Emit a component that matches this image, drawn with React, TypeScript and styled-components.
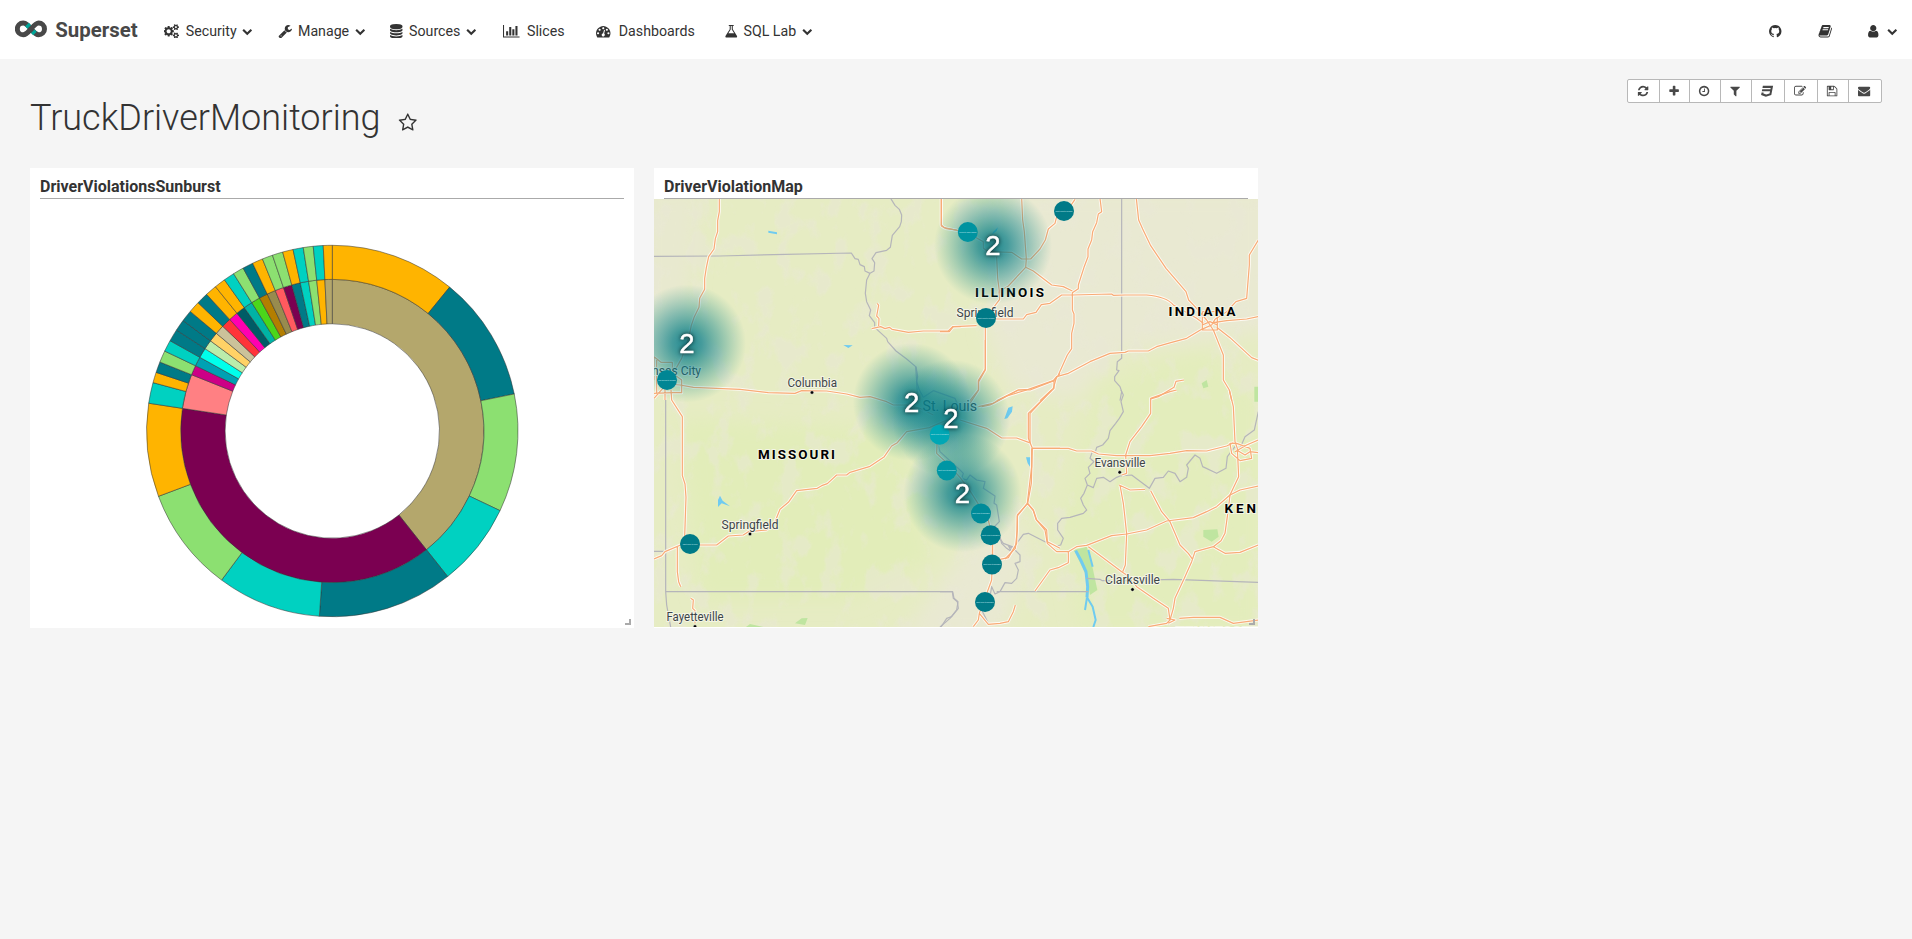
import React from "react";
import styled, { createGlobalStyle } from "styled-components";

const GlobalStyle = createGlobalStyle`
  * { box-sizing: border-box; }
  html, body { margin: 0; padding: 0; background: #f5f5f5; }
  body {
    font-family: Roboto, "Liberation Sans", sans-serif;
    font-size: 14.2px;
    color: #333;
    overflow: hidden;
  }
`;

/* ---------- icons ---------- */

const ICONS = {
  cogs: "M832 896q0-106-75-181t-181-75-181 75-75 181 75 181 181 75 181-75 75-181zm768 512q0-52-38-90t-90-38-90 38-38 90q0 53 37.5 90.5t90.5 37.5 90.5-37.5 37.5-90.5zm0-1024q0-52-38-90t-90-38-90 38-38 90q0 53 37.5 90.5t90.5 37.5 90.5-37.5 37.5-90.5zm-384 421v185q0 10-7 19.5t-16 10.5l-155 24q-11 35-32 76 34 48 90 115 7 11 7 20 0 12-7 19-23 30-82.5 89.5t-78.5 59.5q-11 0-21-7l-115-90q-37 19-77 31-11 108-23 155-7 24-30 24h-186q-11 0-20-7.5t-10-17.5l-23-153q-34-10-75-31l-118 89q-7 7-20 7-11 0-21-8-144-133-144-160 0-9 7-19 10-14 41-53t47-61q-23-44-35-82l-152-24q-10-1-17-9.5t-7-19.5v-185q0-10 7-19.5t16-10.5l155-24q11-35 32-76-34-48-90-115-7-11-7-20 0-12 7-20 22-30 82-89t79-59q11 0 21 7l115 90q34-18 77-32 11-108 23-154 7-24 30-24h186q11 0 20 7.5t10 17.5l23 153q34 10 75 31l118-89q8-7 20-7 11 0 21 8 144 133 144 160 0 8-7 19-12 16-42 54t-45 60q23 48 34 82l152 23q10 2 17 10.5t7 19.5zm640 533v140q0 16-149 31-12 27-30 52 51 113 51 138 0 4-4 7-122 71-124 71-8 0-46-47t-52-68q-20 2-30 2t-30-2q-14 21-52 68t-46 47q-2 0-124-71-4-3-4-7 0-25 51-138-18-25-30-52-149-15-149-31v-140q0-16 149-31 13-29 30-52-51-113-51-138 0-4 4-7 4-2 35-20t59-34 30-16q8 0 46 46.5t52 67.5q20-2 30-2t30 2q51-71 92-112l6-2q4 0 124 70 4 3 4 7 0 25-51 138 17 23 30 52 149 15 149 31zm0-1024v140q0 16-149 31-12 27-30 52 51 113 51 138 0 4-4 7-122 71-124 71-8 0-46-47t-52-68q-20 2-30 2t-30-2q-14 21-52 68t-46 47q-2 0-124-71-4-3-4-7 0-25 51-138-18-25-30-52-149-15-149-31v-140q0-16 149-31 13-29 30-52-51-113-51-138 0-4 4-7 4-2 35-20t59-34 30-16q8 0 46 46.5t52 67.5q20-2 30-2t30 2q51-71 92-112l6-2q4 0 124 70 4 3 4 7 0 25-51 138 17 23 30 52 149 15 149 31z",
  wrench: "M448 1472q0-26-19-45t-45-19-45 19-19 45 19 45 45 19 45-19 19-45zm644-420l-682 682q-37 37-90 37-52 0-91-37l-106-108q-38-36-38-90 0-53 38-91l681-681q39 98 114.5 173.5t173.5 114.5zm634-435q0 39-23 106-47 134-164.5 217.5t-258.5 83.5q-185 0-316.5-131.5t-131.5-316.5 131.5-316.5 316.5-131.5q58 0 121.5 16.5t107.5 46.5q16 11 16 28t-16 28l-293 169v224l193 107q5-3 79-48.5t135.5-81 70.5-35.5q15 0 23.5 10t8.5 25z",
  database: "M896 768q237 0 443-43t325-127v170q0 69-103 128t-280 93.5-385 34.5-385-34.5-280-93.5-103-128v-170q119 84 325 127t443 43zm0 768q237 0 443-43t325-127v170q0 69-103 128t-280 93.5-385 34.5-385-34.5-280-93.5-103-128v-170q119 84 325 127t443 43zm0-384q237 0 443-43t325-127v170q0 69-103 128t-280 93.5-385 34.5-385-34.5-280-93.5-103-128v-170q119 84 325 127t443 43zm0-1152q208 0 385 34.5t280 93.5 103 128v128q0 69-103 128t-280 93.5-385 34.5-385-34.5-280-93.5-103-128v-128q0-69 103-128t280-93.5 385-34.5z",
  chart: "M640 896v512h-256v-512h256zm384-512v1024h-256v-1024h256zm1024 1152v128h-2048v-1536h128v1408h1920zm-640-896v768h-256v-768h256zm384-384v1152h-256v-1152h256z",
  gauge: "M384 1152q0-53-37.5-90.5t-90.5-37.5-90.5 37.5-37.5 90.5 37.5 90.5 90.5 37.5 90.5-37.5 37.5-90.5zm192-448q0-53-37.5-90.5t-90.5-37.5-90.5 37.5-37.5 90.5 37.5 90.5 90.5 37.5 90.5-37.5 37.5-90.5zm428 481l101-382q6-26-7.5-48.5t-38.5-29.5-48 6.5-30 39.5l-101 382q-60 5-107 43.5t-63 98.5q-20 77 20 146t117 89 146-20 89-117q16-60-6-117t-72-91zm660-33q0-53-37.5-90.5t-90.5-37.5-90.5 37.5-37.5 90.5 37.5 90.5 90.5 37.5 90.5-37.5 37.5-90.5zm-640-640q0-53-37.5-90.5t-90.5-37.5-90.5 37.5-37.5 90.5 37.5 90.5 90.5 37.5 90.5-37.5 37.5-90.5zm448 192q0-53-37.5-90.5t-90.5-37.5-90.5 37.5-37.5 90.5 37.5 90.5 90.5 37.5 90.5-37.5 37.5-90.5zm320 448q0 261-141 483-19 29-54 29h-1402q-35 0-54-29-141-221-141-483 0-182 71-348t191-286 286-191 348-71 348 71 286 191 191 286 71 348z",
  flask: "M1591 1448q56 89 21.5 152.5t-140.5 63.5h-1152q-106 0-140.5-63.5t21.5-152.5l503-793v-399h-64q-26 0-45-19t-19-45 19-45 45-19h512q26 0 45 19t19 45-19 45-45 19h-64v399zm-779-725l-272 429h712l-272-429-20-31v-436h-128v436z",
  chevron: "M1683 808l-742 741q-19 19-45 19t-45-19l-742-741q-19-19-19-45.5t19-45.5l166-165q19-19 45-19t45 19l531 531 531-531q19-19 45-19t45 19l166 165q19 19 19 45.5t-19 45.5z",
  github: "M896 128q209 0 385.5 103t279.5 279.5 103 385.5q0 251-146.5 451.5t-378.5 277.5q-27 5-40-7t-13-30q0-3 .5-76.5t.5-134.5q0-97-52-142 57-6 102.5-18t94-39 81-66.5 53-105 20.5-150.5q0-119-79-206 37-91-8-204-28-9-81 11t-92 44l-38 24q-93-26-192-26t-192 26q-16-11-42.5-27t-83.5-38.5-85-13.5q-45 113-8 204-79 87-79 206 0 85 20.5 150t52.5 105 80.5 67 94 39 102.5 18q-39 36-49 103-21 10-45 15t-57 5-65.5-21.5-55.5-62.5q-19-32-48.5-52t-49.5-24l-20-3q-21 0-29 4.5t-5 11.5 9 14 13 12l7 5q22 10 43.5 38t31.5 51l10 23q13 38 44 61.5t67 30 69.5 7 55.5-3.5l23-4q0 38 .5 88.5t.5 54.5q0 18-13 30t-40 7q-232-77-378.5-277.5t-146.5-451.5q0-209 103-385.5t279.5-279.5 385.5-103z",
  book: "M1703 478q40 57 18 129l-275 906q-19 64-76.5 107.5t-122.5 43.5h-923q-77 0-148.5-53.5t-99.5-131.5q-24-67-2-127 0-4 3-27t4-37q1-8-3-21.5t-3-19.5q2-11 8-21t16.5-23.5 16.5-23.5q23-38 45-91.5t30-91.5q3-10 .5-30t-.5-28q3-11 17-28t17-23q21-36 42-92t25-90q1-9-2.5-32t.5-28q4-13 22-30.5t22-22.5q19-26 42.5-84.5t27.5-96.5q1-8-3-25.5t-2-26.5q2-8 9-18t18-23 17-21q8-12 16.5-30.5t15-35 16-36 19.5-32 26.5-23.5 36-11.5 47.5 5.5l-1 3q38-9 51-9h761q74 0 114 56t18 130l-274 906q-36 119-71.5 153.5t-128.5 34.5h-869q-27 0-38 15-11 16-1 43 24 70 144 70h923q29 0 56-15.5t35-41.5l300-987q7-22 5-57 38 15 59 43zm-1064 2q-4 13 2 22.5t20 9.5h608q13 0 25.5-9.5t16.5-22.5l21-64q4-13-2-22.5t-20-9.5h-608q-13 0-25.5 9.5t-16.5 22.5zm-83 256q-4 13 2 22.5t20 9.5h608q13 0 25.5-9.5t16.5-22.5l21-64q4-13-2-22.5t-20-9.5h-608q-13 0-25.5 9.5t-16.5 22.5z",
  user: "M1536 1399q0 109-62.5 187t-150.5 78h-854q-88 0-150.5-78t-62.5-187q0-85 8.5-160.5t31.5-152 58.5-131 94-89 134.5-34.5q131 128 313 128t313-128q76 0 134.5 34.5t94 89 58.5 131 31.5 152 8.5 160.5zm-256-887q0 159-112.5 271.5t-271.5 112.5-271.5-112.5-112.5-271.5 112.5-271.5 271.5-112.5 271.5 112.5 112.5 271.5z",
  star: "M1201 1004l306-297-422-62-189-382-189 382-422 62 306 297-73 421 378-199 377 199zm527-357q0 22-26 48l-363 354 86 500q1 7 1 20 0 50-41 50-19 0-40-12l-449-236-449 236q-22 12-40 12-21 0-31.5-14.5t-10.5-35.5q0-6 2-20l86-500-364-354q-25-27-25-48 0-37 56-46l502-73 225-455q19-41 49-41t49 41l225 455 502 73q56 9 56 46z",
  refresh: "M1639 1056q0 5-1 7-64 268-268 434.5t-478 166.5q-146 0-282.5-55t-243.5-157l-129 129q-19 19-45 19t-45-19-19-45v-448q0-26 19-45t45-19h448q26 0 45 19t19 45-19 45l-137 137q71 66 161 102t187 36q134 0 250-65t186-179q11-17 53-117 8-23 30-23h192q13 0 22.5 9.5t9.5 22.5zm25-800v448q0 26-19 45t-45 19h-448q-26 0-45-19t-19-45 19-45l138-138q-148-137-349-137-134 0-250 65t-186 179q-11 17-53 117-8 23-30 23h-199q-13 0-22.5-9.5t-9.5-22.5v-7q65-268 270-434.5t480-166.5q146 0 284 55.5t245 156.5l130-129q19-19 45-19t45 19 19 45z",
  plus: "M1600 736v192q0 40-28 68t-68 28h-416v416q0 40-28 68t-68 28h-192q-40 0-68-28t-28-68v-416h-416q-40 0-68-28t-28-68v-192q0-40 28-68t68-28h416v-416q0-40 28-68t68-28h192q40 0 68 28t28 68v416h416q40 0 68 28t28 68z",
  clock: "M1024 544v448q0 14-9 23t-23 9h-320q-14 0-23-9t-9-23v-64q0-14 9-23t23-9h224v-352q0-14 9-23t23-9h64q14 0 23 9t9 23zm416 352q0-148-73-273t-198-198-273-73-273 73-198 198-73 273 73 273 198 198 273 73 273-73 198-198 73-273zm224 0q0 209-103 385.5t-279.5 279.5-385.5 103-385.5-103-279.5-279.5-103-385.5 103-385.5 279.5-279.5 385.5-103 385.5 103 279.5 279.5 103 385.5z",
  filter: "M1595 295q17 41-14 70l-493 493v742q0 42-39 59-13 5-25 5-27 0-45-19l-256-256q-19-19-19-45v-486l-493-493q-31-29-14-70 17-39 59-39h1280q42 0 59 39z",
  css: "M275 128h1505l-266 1333-804 267-698-267 71-356h297l-29 147 422 161 486-161 68-339h-1208l58-297h1209l38-191h-1208z",
  edit: "M888 1184l116-116-152-152-116 116v56h96v96h56zm440-720q-16-16-33 1l-350 350q-17 17-1 33t33-1l350-350q17-17 1-33zm80 594v190q0 119-84.5 203.5t-203.5 84.5h-832q-119 0-203.5-84.5t-84.5-203.5v-832q0-119 84.5-203.5t203.5-84.5h832q63 0 117 25 15 7 18 23 3 17-9 29l-49 49q-14 14-32 8-23-6-45-6h-832q-66 0-113 47t-47 113v832q0 66 47 113t113 47h832q66 0 113-47t47-113v-126q0-13 9-22l64-64q15-15 35-7t20 29zm-96-738l288 288-672 672h-288v-288zm444 132l-92 92-288-288 92-92q28-28 68-28t68 28l152 152q28 28 28 68t-28 68z",
  save: "M512 1536h768v-384h-768v384zm896 0h128v-896q0-14-10-38.5t-20-34.5l-281-281q-10-10-34-20t-39-10v416q0 40-28 68t-68 28h-576q-40 0-68-28t-28-68v-416h-128v1280h128v-416q0-40 28-68t68-28h832q40 0 68 28t28 68v416zm-384-928v-320q0-13-9.5-22.5t-22.5-9.5h-192q-13 0-22.5 9.5t-9.5 22.5v320q0 13 9.5 22.5t22.5 9.5h192q13 0 22.5-9.5t9.5-22.5zm640 32v928q0 40-28 68t-68 28h-1344q-40 0-68-28t-28-68v-1344q0-40 28-68t68-28h928q40 0 88 20t76 48l280 280q28 28 48 76t20 88z",
  envelope: "M1792 710v794q0 66-47 113t-113 47h-1472q-66 0-113-47t-47-113v-794q44 49 101 87 362 246 497 345 57 42 92.5 65.5t94.5 48 110 24.5h2q51 0 110-24.5t94.5-48 92.5-65.5q170-123 498-345 57-39 100-87zm0-294q0 79-49 151t-122 123q-376 261-468 325-10 7-42.5 31t-54 38.5-52 32.5-57.5 27-50 9h-2q-23 0-50-9t-57.5-27-52-32.5-54-38.5-42.5-31q-91-64-262-182.5t-205-142.5q-62-42-117-115.5t-55-136.5q0-78 41.5-130t118.5-52h1472q65 0 112.5 47t47.5 113z",
};
type IconName = keyof typeof ICONS;

const WIDE: Partial<Record<IconName, number>> = { cogs: 1920, chart: 2048 };

const IconSvg = styled.svg`
  display: block;
  flex: none;
  fill: currentColor;
`;

function Icon({ name, size }: { name: IconName; size: number }) {
  const units = WIDE[name] ?? 1792;
  return (
    <IconSvg width={(size * units) / 1792} height={size} viewBox={`0 0 ${units} 1792`}>
      <path d={ICONS[name]} />
    </IconSvg>
  );
}

/* ---------- navigation ---------- */

const NavBar = styled.nav`
  height: 59px;
  background: #fff;
  display: flex;
  align-items: stretch;
  padding-left: 15px;
`;

const Brand = styled.a`
  display: flex;
  align-items: center;
  width: 148.5px;
  padding-bottom: 2px;
  color: #484848;
`;

const BrandMark = styled.svg`
  width: 32px;
  height: 18px;
  margin-right: 8.3px;
`;

const BrandName = styled.span`
  font-size: 20.4px;
  font-weight: 700;
  line-height: 24px;
  padding-top: 2px;
`;

const NavItem = styled.a<{ $width: number }>`
  display: flex;
  align-items: center;
  width: ${(p) => p.$width}px;
  padding-top: 3px;
`;

const NavIcon = styled.span<{ $width: number }>`
  width: ${(p) => p.$width}px;
  flex: none;
`;

const NavLabel = styled.span`
  margin-right: 5.5px;
  line-height: 20px;
  white-space: nowrap;
`;

const NavRight = styled.div`
  display: flex;
  margin-left: auto;
`;

const NAV: { icon: IconName; label: string; width: number; iconWidth: number; menu?: boolean }[] = [
  { icon: "cogs", label: "Security", width: 114, iconWidth: 22.3, menu: true },
  { icon: "wrench", label: "Manage", width: 111, iconWidth: 20.5, menu: true },
  { icon: "database", label: "Sources", width: 114.5, iconWidth: 20.6, menu: true },
  { icon: "chart", label: "Slices", width: 93, iconWidth: 24 },
  { icon: "gauge", label: "Dashboards", width: 128, iconWidth: 22.8 },
  { icon: "flask", label: "SQL Lab", width: 110, iconWidth: 19.5, menu: true },
];

/* ---------- dashboard header ---------- */

const Header = styled.header`
  height: 109px;
  padding: 20px 30px 0;
  display: flex;
  justify-content: space-between;
  align-items: flex-start;
`;

const TitleRow = styled.div`
  display: flex;
  align-items: center;
  padding-top: 14px;
`;

const Title = styled.h1`
  margin: 0 17.5px 0 0;
  font-size: 36px;
  line-height: 50px;
  font-weight: 300;
`;

const StarSlot = styled.span`
  padding-top: 10px;
`;

const Toolbar = styled.div`
  display: flex;
  height: 24px;
  border: 1px solid #b8b8b8;
  border-radius: 2px;
  background: #fff;
  color: #484848;
`;

const ToolButton = styled.button<{ $width: number }>`
  width: ${(p) => p.$width}px;
  padding: 0 1px 0 0;
  border: 0;
  border-left: 1px solid #b8b8b8;
  background: none;
  color: inherit;
  display: flex;
  align-items: center;
  justify-content: center;
  &:first-child { border-left: 0; }
`;

const TOOLS: [IconName, number][] = [
  ["refresh", 31], ["plus", 30], ["clock", 31], ["filter", 31],
  ["css", 33], ["edit", 33], ["save", 31], ["envelope", 33],
];

/* ---------- cards ---------- */

const Grid = styled.main`
  display: flex;
  gap: 20px;
  padding: 0 30px;
`;

const Card = styled.section`
  position: relative;
  width: 604px;
  height: 460px;
  background: #fff;
  display: flex;
  flex-direction: column;
`;

const CardTitle = styled.h2`
  margin: 0 10px;
  height: 31px;
  padding-top: 9px;
  border-bottom: 1px solid #aaa;
  font-size: 16px;
  line-height: 20px;
  font-weight: 700;
`;

const Drawing = styled.svg`
  display: block;
  width: 604px;
  height: 428px;
`;

const ResizeHandle = styled.span`
  position: absolute;
  right: 3px;
  bottom: 3px;
  width: 6px;
  height: 6px;
  border-right: 2px solid #aaa;
  border-bottom: 2px solid #aaa;
`;

/* ---------- sunburst ---------- */

const OR = "#ffb400", DT = "#007a87", GR = "#8ce071", CY = "#00d1c1";

const OUTER: [number, string][] = [
  [39.2, OR], [78.5, DT], [115.4, GR], [141.6, CY], [184, DT], [216.6, CY], [249.4, GR], [278.6, OR],
  [285.1, CY], [288.4, OR], [291.8, DT], [295.5, GR], [299.1, CY], [302.9, DT], [306.5, DT], [310.1, DT],
  [313.7, OR], [317.4, DT], [321, OR], [324.5, OR], [327.9, CY], [331.3, GR], [334.6, DT], [337.9, OR],
  [341.2, GR], [344.5, GR], [347.8, OR], [351, CY], [354.1, GR], [357.2, CY], [360, OR],
];
const INNER: [number, string][] = [
  [141.6, "#b4a76c"], [278.6, "#7b0051"], [291.8, "#ff8083"], [295.5, "#cc0086"], [299.1, "#00a1b3"],
  [302.9, "#00ffeb"], [306.5, "#bbedab"], [310.1, "#ffd266"], [313.7, "#cbc29a"], [317.4, "#ff3339"],
  [321, "#ff00b1"], [324.5, "#005c66"], [327.9, "#00b3a5"], [331.3, "#4bd61a"], [334.6, "#b37e00"],
  [337.9, "#988b4e"], [341.2, "#ff5a5f"], [344.5, "#7b0051"], [347.8, DT], [351, CY], [354.1, GR],
  [357.2, OR], [360, "#b4a76c"],
];

function arc(a0: number, a1: number, r0: number, r1: number) {
  const p = (a: number, r: number) => {
    const t = (a * Math.PI) / 180;
    return `${(r * Math.sin(t)).toFixed(2)} ${(-r * Math.cos(t)).toFixed(2)}`;
  };
  const large = a1 - a0 > 180 ? 1 : 0;
  return `M${p(a0, r1)}A${r1} ${r1} 0 ${large} 1 ${p(a1, r1)}L${p(a1, r0)}A${r0} ${r0} 0 ${large} 0 ${p(a0, r0)}Z`;
}

function Ring({ parts, r0, r1 }: { parts: [number, string][]; r0: number; r1: number }) {
  return (
    <g stroke="#333" strokeOpacity={0.75} strokeWidth={0.7}>
      {parts.map(([end, fill], i) => (
        <path key={i} d={arc(i ? parts[i - 1][0] : 0, end, r0, r1)} fill={fill} />
      ))}
    </g>
  );
}

function Sunburst() {
  return (
    <Drawing viewBox="30 199 604 428">
      <g transform="translate(332.3 431)">
        <Ring parts={INNER} r0={107.2} r1={151.6} />
        <Ring parts={OUTER} r0={151.6} r1={185.7} />
      </g>
    </Drawing>
  );
}

/* ---------- map ---------- */

/* Every quadrant is drawn in its own 3x grid. */
const QUADS = { nw: [640, 160], ne: [940, 160], sw: [640, 390], se: [940, 390], mid: [860, 340] } as const;
type Quad = keyof typeof QUADS;
const place = (q: Quad) => `translate(${QUADS[q][0]} ${QUADS[q][1]}) scale(0.33333)`;

const ROADS: [Quad, string][] = [
  ["nw", "M238 115V155L233 182V215L226 236L222 267L206 290L199 323L194 355V388L179 415L177 442L163 470L154 496L149 520L140 550L125 595L108 625"],
  ["nw", "M42 590L63 607H97V640L125 660V698H97L42 700M42 590V660M50 600V700M75 640V720M42 715L80 672L120 675L160 682L300 688L385 698L465 700L485 692L560 693L620 702L660 712L690 710L740 725L760 735L800 735L840 745L880 765"],
  ["nw", "M904 115V195L912 203L955 212M712 430L716 436L710 468L717 476L716 498M695 506L722 500L735 506L748 502L756 508L805 517L850 513H925L938 500H962"],
  ["ne", "M4 115V198L20 206L50 210M0 515H28L40 500L110 497M166 477H250L260 464L288 457L304 434L330 430L365 405H397L515 402L520 406L555 405L620 405Q680 410 700 435L770 475L790 490"],
  ["ne", "M85 220L130 245V265L145 275L215 277L245 297H272L300 267L316 240L325 207L345 190L350 170L390 140L405 118M245 115L248 180L253 215L259 297L257 322L205 378L177 395L179 418L140 470M170 290L173 355L179 400M257 322L280 333L335 375L370 380L397 393M480 115L485 155L475 162L470 188L458 215L455 240L444 267V290L432 322L415 375V386L397 398V450L402 462V490L395 520V566L382 585L355 645"],
  ["ne", "M589 115L596 180L608 207L632 257L678 325L738 395L746 420L765 440L800 480L820 510L850 585V660L868 690L875 722M787 455H832V510H787V455M787 495L810 485L832 495M955 240L928 285V315L920 415L888 425L860 455L825 478L815 495L785 508L740 535L695 547L650 560L625 573H565L555 577L510 580L450 605L385 640L350 650L340 662L265 688L235 690L170 722M820 488L860 482L920 477L955 470M830 502L870 533L935 593L955 601"],
  ["ne", "M136 500V627L115 662V690L90 722M350 650L340 685L300 722M732 660L708 664L702 682L655 710L632 717"],
  ["sw", "M93 0L95 30L127 80V257L135 282L138 322L134 440M112 470V545L116 575L122 590M42 507L65 497L75 485L122 465H180L230 465L265 438L310 435L325 425L380 420L405 395L420 358L445 337L470 302L532 295L545 287L562 281L590 255H620L630 247L688 230L733 200L755 168L772 158L800 125L868 113L920 90M152 625L160 630L158 655L165 662V700"],
  ["mid", "M376 0V90L356 125V150L330 190M355 200L400 190L475 150H510L582 122L600 100M582 122V145L505 220V295L517 325L514 430L503 490L472 525V570L466 625L435 657M503 490L520 510L530 540L560 570L562 605L600 625M300 240L380 265L425 294H470L508 308M517 325H600M232 290L230 340L262 370L300 412L325 445L360 500L385 540L398 600V660"],
  ["se", "M278 175H385L410 183H455L475 192L530 197H630L690 190L740 182L800 183L860 168L880 158M275 175V230L262 340L232 378L230 460L205 503L180 508M262 340L280 362L288 388L315 420L322 460L350 485H385V518L355 533L330 540L285 603M385 485L410 470L440 466L515 437L560 432L620 420L680 393L760 383L800 365L830 350L870 315L900 300L955 288M445 470L545 545L560 555L590 590L640 625L685 655L690 690"],
  ["se", "M537 285L570 300L615 298M540 285L550 340L554 375L560 432L556 525L548 545M632 302L665 365L690 395L705 430L720 465L745 490L758 508M557 195L570 155L605 110L632 70V25L690 5L710 0M557 195L560 250L545 255M868 0L880 50L885 155L892 175L896 260L870 315L862 380L855 430L843 452L820 470L765 485L755 515L733 565L705 625L700 655L690 690L680 700L625 710M820 470L855 490L900 487L955 465M870 160H890L930 175L935 205L900 212L875 190ZM885 185L920 165L955 150M890 180L915 195L930 185L955 188M718 685L760 682H840L880 700L955 690M680 685L705 690L685 700M157 465V510L155 570L143 603L118 670L115 690L100 710M118 670L145 703L180 700L205 695L220 665L226 645M270 160V70L335 0M125 50L150 45L200 18L260 0"],
];

const BORDERS: [Quad, string][] = [
  ["nw", "M42 289L240 288L400 284L634 279L645 296L655 298L660 314L673 320L675 333L690 340M752 115L765 136L778 148L785 165L784 185L779 200L757 226L751 262L740 271L708 278L696 296L704 308L702 333L690 340L680 360L676 400L680 425L692 450L688 467L704 488V502L740 535L743 545L768 573L800 597L827 620L830 665L832 700"],
  ["ne", "M545 115V595L532 605L530 630L537 632L524 650V662L540 680L545 695L540 722"],
  ["sw", "M77 0V605H937L940 625L952 635L955 655L935 680L920 685L903 711M42 484H77M77 605L80 645L92 711"],
  ["mid", "M168 80L173 110L170 125L178 150L190 172L220 152L285 175L295 200L290 240L240 265L233 310L240 335L300 390L310 400L305 415L320 420L330 405L350 420L375 425L370 445L405 468L402 490L410 495L418 545L405 558L415 590L430 610L470 625"],
  ["se", "M543 0L550 15L543 35L550 65L538 85L527 100L510 122L505 145L488 165L470 172L465 190L457 185L450 205L462 215L445 232L450 250L435 265L442 285L432 310L422 325L430 345L440 360L430 370L390 382L365 385L353 400V420L370 445L362 465L350 468L315 455L265 430L250 433L215 480M442 285L460 293L470 265L490 262L510 275L530 262L540 258L575 255L595 270L628 295L645 265L670 262L685 243L705 250L720 275L740 262L745 235L740 225L765 195L780 205L788 230L830 250L858 235L862 200L885 170L900 175L915 140L943 120L955 65"],
  ["se", "M180 440L185 460L200 475L215 485L205 467L225 480L240 495V515L225 520L235 540L230 565L215 580L195 578L180 605L165 612L155 590L150 620L155 655L125 660L145 700M170 605H445M440 565L480 568L487 572H560L700 568L955 577M0 605H38L42 625L54 635L50 660L30 685L0 711"],
];

const MARKERS: [number, number, string, string][] = [
  [967.8, 232, "#0093a0", "Peoria to Ceder Rapids"],
  [1064, 211, "#007a87", "Saint Louis to Chicago"],
  [986, 318, "#007a87", "Saint Louis to Chicago"],
  [667, 380, "#008694", "Des Moines to Chicago"],
  [690, 544, "#007a87", "Saint Louis to Tulsa"],
  [939.7, 434.8, "#00a7b5", "Saint Louis to Memphis"],
  [946.8, 470.5, "#0096a4", "Saint Louis to Memphis"],
  [981, 513.5, "#008b99", "Saint Louis to Memphis"],
  [990.7, 535.3, "#007f8c", "Saint Louis to Memphis"],
  [992, 564.5, "#007a87", "Saint Louis to Memphis"],
  [985, 602, "#007a87", "Saint Louis to Memphis"],
];

const CLUSTERS = [[993, 245.5], [687, 343.5], [911.7, 402], [951, 418.5], [962.5, 493.3]];

const CITIES: [string, number, number, number, number, number?, number?][] = [
  ["Springfield", 956.5, 316.5, 57, 12.5],
  ["Kansas City", 638, 374.5, 63, 13.4],
  ["Columbia", 787.5, 387, 49.5, 12.5, 812, 392.5],
  ["Springfield", 721.5, 529, 57, 12.5, 750, 534],
  ["Evansville", 1094.5, 467, 51, 12.5, 1119.7, 472.3],
  ["Clarksville", 1105, 584, 55, 12.5, 1132.5, 589.5],
  ["Fayetteville", 666.5, 621, 57, 12.5, 695, 626.5],
];

const STATES: [string, number, number, number][] = [
  ["ILLINOIS", 975, 296.7, 69],
  ["INDIANA", 1168.5, 316, 67],
  ["MISSOURI", 758, 459.2, 77],
  ["KENTUCKY", 1224.5, 512.7, 89],
];

const StateName = styled.text`
  font: 700 13.4px Roboto, sans-serif;
  fill: #000;
  stroke: #f4f5e6;
  stroke-width: 2px;
  paint-order: stroke;
`;

const CityName = styled.text`
  font-family: Roboto, sans-serif;
  fill: #3c4448;
  stroke: #f4f5e6;
  stroke-width: 2px;
  paint-order: stroke;
`;

const ClusterCount = styled.text`
  font: 27.5px "Liberation Sans", sans-serif;
  fill: #fff;
  stroke: #fff;
  stroke-width: 0.5px;
  text-anchor: middle;
  filter: drop-shadow(0 0 2px rgba(0, 0, 0, 0.85));
`;

const RouteName = styled.text`
  font: 1.7px Roboto, sans-serif;
  fill: #c4e4e7;
  text-anchor: middle;
`;

function ViolationMap() {
  return (
    <Drawing viewBox="654 199 604 428">
      <defs>
        <radialGradient id="glow">
          <stop offset="0" stopColor="#007a87" stopOpacity="0.86" />
          <stop offset="0.25" stopColor="#007a87" stopOpacity="0.7" />
          <stop offset="0.55" stopColor="#0a828a" stopOpacity="0.43" />
          <stop offset="0.8" stopColor="#148a88" stopOpacity="0.19" />
          <stop offset="1" stopColor="#1c9088" stopOpacity="0" />
        </radialGradient>
        <filter id="soft" x="-30%" y="-30%" width="160%" height="160%">
          <feGaussianBlur stdDeviation="9" />
        </filter>
        <filter id="patches" x="0" y="0" width="100%" height="100%" colorInterpolationFilters="sRGB">
          <feTurbulence type="fractalNoise" baseFrequency="0.045 0.03" numOctaves="4" seed="8" />
          <feColorMatrix values="0 0 0 0 0.915  0 0 0 0 0.91  0 0 0 0 0.84  6 0 0 0 -3.1" />
        </filter>
      </defs>
      <rect x="654" y="199" width="604" height="428" fill="#e6ecc3" />
      <g filter="url(#soft)">
        <path d="M1010 190H1270V330L1190 345L1120 350L1075 400L1010 390L985 330Z" fill="#e9e9d2" />
        <path d="M640 190H700L690 300L670 360H640Z" fill="#e8e9cf" />
        <path d="M980 535L1020 520L1030 560L1000 640H900L945 575Z" fill="#e9e9d2" />
        <path d="M680 420L900 430L930 560L850 600L700 600Z" fill="#e2edb9" />
        <path d="M1100 385L1200 350L1260 400V630H1080L1060 520Z" fill="#e3edbc" />
      </g>
      <rect x="654" y="199" width="604" height="428" filter="url(#patches)" opacity="0.5" />

      <g transform={place("se")} fill="#bfe5a0">
        <path d="M402 480L440 470L455 520L472 600L450 615L440 560Z" />
        <path d="M790 420L832 418L836 440L815 455L790 440ZM943 -10H955V35H943ZM785 -20L800 -30L805 -10L790 -5Z" />
      </g>
      <g transform={place("sw")} fill="#bfe5a0">
        <path d="M465 700L485 685L503 684L495 705ZM318 711L330 702L370 711Z" />
      </g>
      <g fill="#6fcbf0">
        <path transform={place("nw")} d="M385 212L411 217V223L385 218ZM610 555L638 556L625 564Z" />
        <path transform={place("sw")} d="M234 330L240 317L248 332L270 349L245 340L234 351Z" />
        <path transform={place("mid")} d="M433 237L445 203L458 199L456 215L442 235ZM498 352H513L510 380L503 370Z" />
        <path transform={place("ne")} d="M160 215L174 202L170 212L155 225Z" />
      </g>
      <g transform={place("se")} fill="none" stroke="#6fcbf0" strokeLinejoin="round">
        <path strokeWidth="9" d="M407 482L422 510L438 545L443 590L441 622" />
        <path strokeWidth="6" d="M441 622L458 650L467 690L460 711M441 622L435 660M445 480L458 530" />
      </g>

      <g fill="none" strokeLinejoin="round">
        <g stroke="#b5b5ba" strokeWidth="3.6">
          {BORDERS.map(([q, d], i) => <path key={i} transform={place(q)} d={d} />)}
        </g>
        <g stroke="#fdfaf2" strokeWidth="9">
          {ROADS.map(([q, d], i) => <path key={i} transform={place(q)} d={d} />)}
        </g>
        <g stroke="#f8ab76" strokeWidth="3.6">
          {ROADS.map(([q, d], i) => <path key={i} transform={place(q)} d={d} />)}
        </g>
      </g>

      {CITIES.map(([name, x, y, w, size, dx, dy]) => (
        <g key={name + x}>
          <CityName x={x} y={y} fontSize={size} textLength={w} lengthAdjust="spacingAndGlyphs">{name}</CityName>
          {dx && <circle cx={dx} cy={dy} r="1.7" stroke="#fff" strokeWidth="0.4" />}
        </g>
      ))}
      <CityName x="922.5" y="411" fontSize="15" textLength="54.5" lengthAdjust="spacingAndGlyphs">St. Louis</CityName>
      {STATES.map(([name, x, y, w]) => (
        <StateName key={name} x={x} y={y} textLength={w}>{name}</StateName>
      ))}
      <StateName x="1176" y="635.5" textLength="82">TENNESSEE</StateName>

      {CLUSTERS.map(([x, y]) => <circle key={x} cx={x} cy={y} r="59" fill="url(#glow)" />)}
      {MARKERS.map(([x, y, fill, name]) => (
        <g key={`${x}-${y}`}>
          <circle cx={x} cy={y} r="10" fill={fill} />
          <RouteName x={x} y={y + 0.6}>{name}</RouteName>
        </g>
      ))}
      {CLUSTERS.map(([x, y]) => <ClusterCount key={x} x={x} y={y + 9.8}>2</ClusterCount>)}
    </Drawing>
  );
}

/* ---------- page ---------- */

export default function App() {
  return (
    <>
      <GlobalStyle />
      <NavBar>
        <Brand>
          <BrandMark viewBox="0 0 32 18" fill="none" strokeWidth="5">
            <path d="M16 9C13 5.4 11 3 8.2 3A5.7 5.7 0 0 0 8.2 14.8C11 14.8 13 12.5 16 9C19 5.4 21 3 23.6 3A5.7 5.7 0 0 1 23.6 14.8C21 14.8 19 12.5 16 9Z" stroke="#484848" />
            <path d="M12 4.5L14.2 7M17.8 11.3L20 13.5" stroke="#00a699" />
          </BrandMark>
          <BrandName>Superset</BrandName>
        </Brand>
        {NAV.map((item) => (
          <NavItem key={item.label} $width={item.width}>
            <NavIcon $width={item.iconWidth}><Icon name={item.icon} size={14.5} /></NavIcon>
            <NavLabel>{item.label}</NavLabel>
            {item.menu && <Icon name="chevron" size={10.5} />}
          </NavItem>
        ))}
        <NavRight>
          <NavItem $width={49.5}><Icon name="github" size={14.5} /></NavItem>
          <NavItem $width={48.5}><Icon name="book" size={14.5} /></NavItem>
          <NavItem $width={46}>
            <NavIcon $width={21}><Icon name="user" size={14.5} /></NavIcon>
            <Icon name="chevron" size={10.5} />
          </NavItem>
        </NavRight>
      </NavBar>
      <Header>
        <TitleRow>
          <Title>TruckDriverMonitoring</Title>
          <StarSlot><Icon name="star" size={19.5} /></StarSlot>
        </TitleRow>
        <Toolbar>
          {TOOLS.map(([name, width]) => (
            <ToolButton key={name} $width={width}><Icon name={name} size={12.2} /></ToolButton>
          ))}
        </Toolbar>
      </Header>
      <Grid>
        <Card>
          <CardTitle>DriverViolationsSunburst</CardTitle>
          <Sunburst />
          <ResizeHandle />
        </Card>
        <Card>
          <CardTitle>DriverViolationMap</CardTitle>
          <ViolationMap />
          <ResizeHandle />
        </Card>
      </Grid>
    </>
  );
}
